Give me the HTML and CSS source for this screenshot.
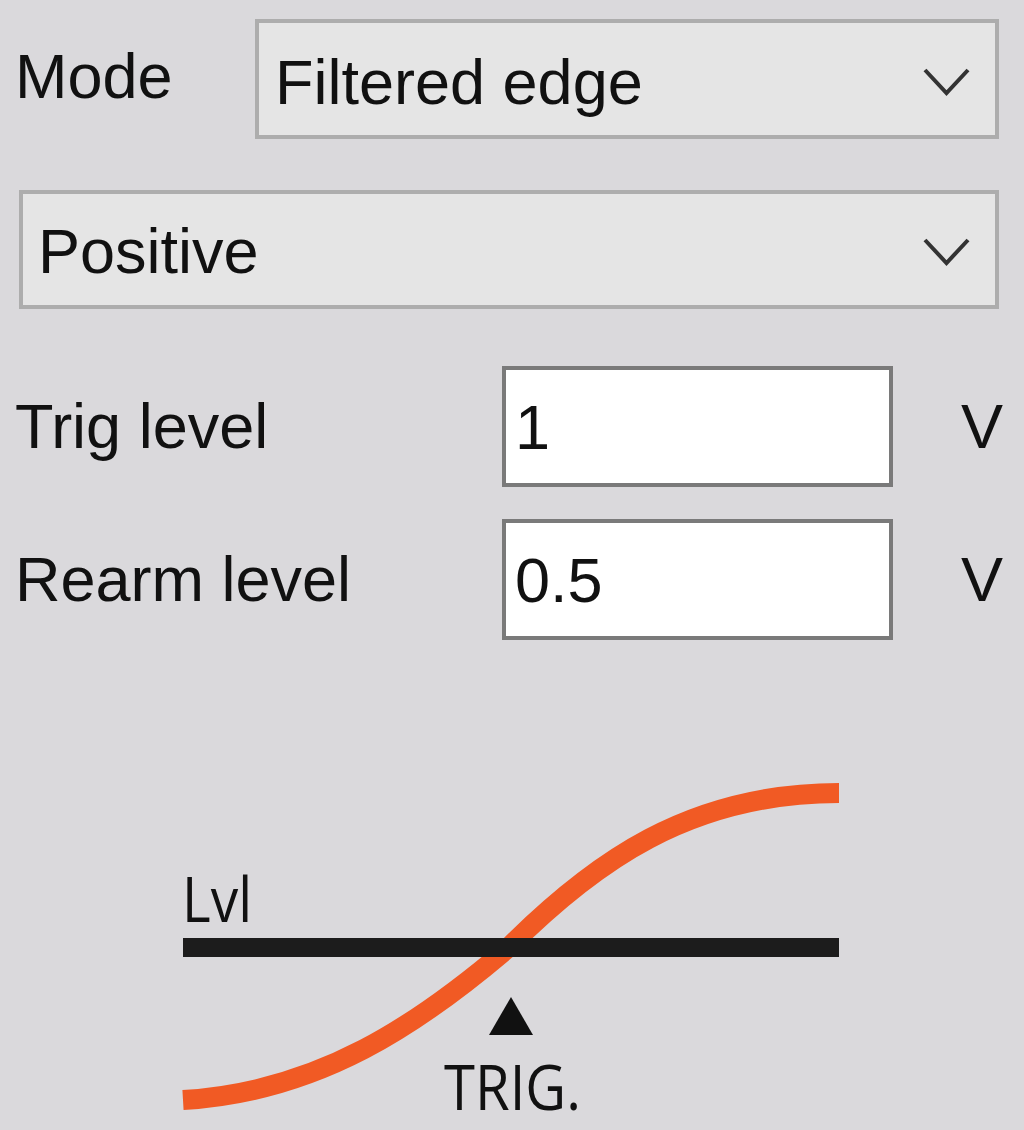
FILE: index.html
```html
<!DOCTYPE html>
<html lang="en">
<head>
    <meta charset="UTF-8">
    <title>Trigger settings</title>
    <link rel="stylesheet" href="styles.css">
</head>
<body>
    <div class="panel">
        <div class="row-mode">
            <span class="label-mode">Mode</span>
            <div class="combo">
                <span>Filtered edge</span>
                <svg class="chevron" viewBox="0 0 47 28"><path d="M2 2 L23.5 25 L45 2" /></svg>
            </div>
        </div>

        <div class="combo combo-wide">
            <span>Positive</span>
            <svg class="chevron" viewBox="0 0 47 28"><path d="M2 2 L23.5 25 L45 2" /></svg>
        </div>

        <div class="field-row first">
            <span class="field-label">Trig level</span>
            <input class="field-input" type="text" value="1">
            <span class="unit">V</span>
        </div>

        <div class="field-row">
            <span class="field-label">Rearm level</span>
            <input class="field-input" type="text" value="0.5">
            <span class="unit">V</span>
        </div>

        <svg class="diagram" viewBox="160 770 700 360" width="700" height="360">
            <path class="curve" d="M183,1100 C320,1092 420,1023 508,948 C593,863 689,793 839,793" />
            <rect x="183" y="938" width="656" height="19" fill="#1c1c1c" />
            <polygon points="489,1035 533,1035 511,997" fill="#111" />
            <text class="diagram-text" x="182" y="922" textLength="70" lengthAdjust="spacingAndGlyphs">Lvl</text>
            <text class="diagram-text" x="444" y="1110" textLength="137" lengthAdjust="spacingAndGlyphs">TRIG.</text>
        </svg>
    </div>
</body>
</html>
```

FILE: styles.css
```css
body {
    margin: 0;
    background-color: #dad9dc;
    font-family: 'Liberation Sans', Arial, sans-serif;
    font-size: 63px;
    color: #111;
    overflow: hidden;
}

.panel {
    padding: 19px 25px 0 15px;
    height: 1111px;
}

.row-mode {
    display: flex;
    align-items: center;
    height: 120px;
}

.label-mode {
    flex-shrink: 0;
    width: 240px;
    margin-bottom: 6px;
    line-height: 1;
}

.combo {
    flex: 1;
    display: flex;
    align-items: center;
    box-sizing: border-box;
    height: 120px;
    padding: 6px 25px 0 16px;
    border: 4px solid #adadad;
    background-color: #e5e5e5;
    line-height: 1;
}

.combo-wide {
    height: 119px;
    margin: 51px 0 0 4px;
    padding-left: 15px;
    padding-top: 4px;
}

.chevron {
    width: 47px;
    height: 28px;
    margin-left: auto;
}

.chevron path {
    fill: none;
    stroke: #333;
    stroke-width: 4;
}

.field-row {
    display: flex;
    align-items: center;
    height: 121px;
    margin-top: 32px;
}

.field-row.first {
    margin-top: 57px;
}

.field-label {
    flex-shrink: 0;
    width: 487px;
    line-height: 1;
}

.field-input {
    flex-shrink: 0;
    box-sizing: border-box;
    width: 391px;
    height: 121px;
    padding: 0 0 0 9px;
    border: 4px solid #7a7a7a;
    background-color: #ffffff;
    font: inherit;
    color: #111;
    outline: none;
}

.unit {
    flex-shrink: 0;
    margin-left: 68px;
    line-height: 1;
}

.diagram {
    display: block;
    margin: 130px 0 0 145px;
}

.curve {
    fill: none;
    stroke: #f15a24;
    stroke-width: 20;
}

.diagram-text {
    font-family: 'Open Sans', sans-serif;
    font-size: 62px;
    fill: #111;
}
```
